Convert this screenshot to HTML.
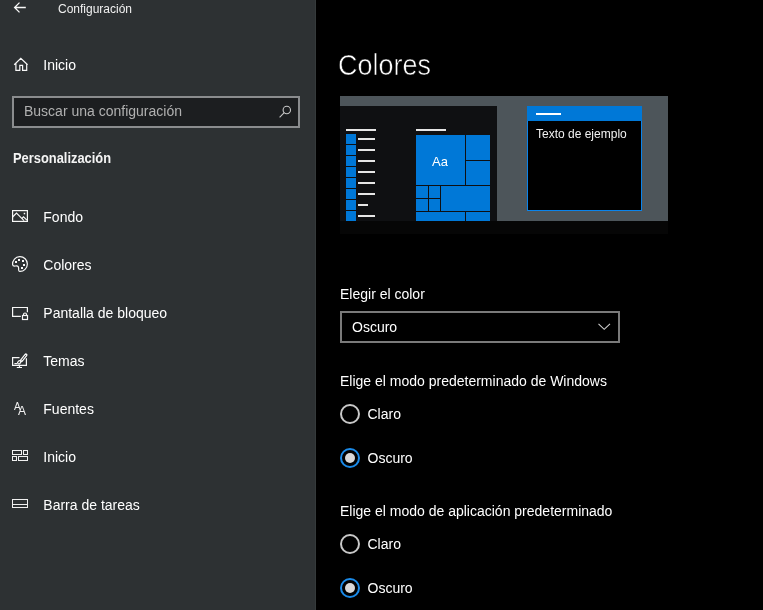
<!DOCTYPE html>
<html><head><meta charset="utf-8">
<style>
*{margin:0;padding:0;box-sizing:border-box}
html,body{width:763px;height:610px;overflow:hidden;background:#000}
body{position:relative;font-family:"Liberation Sans",sans-serif;color:#fff}
.a{position:absolute;white-space:nowrap}
#side{position:absolute;left:0;top:0;width:316px;height:610px;background:#2d3133}
#side .edge{position:absolute;left:315px;top:0;width:1px;height:610px;background:#353a3b}
.t14{font-size:14px;line-height:14px}
.nav{color:#fff}
.tx{filter:grayscale(1)}
svg{position:absolute;overflow:visible}
.pv{position:absolute}
.blue{background:#0078d7}
.wl{background:#e6e6e6;height:2px}
</style></head><body>
<div id="side">
  <div class="edge"></div>
  <!-- back arrow -->
  <svg style="left:13px;top:2px" width="13" height="11" viewBox="0 0 13 11"><path d="M12.8 5.5H1.6M6.5 0.6L1.6 5.5 6.5 10.4" fill="none" stroke="#f8f8f8" stroke-width="1.3"/></svg>
  <div class="a tx" style="left:58px;top:3px;font-size:12px;line-height:12px;color:#f0f0f0">Configuración</div>

  <!-- home -->
  <svg style="left:13px;top:56px" width="16" height="16" viewBox="0 0 16 16"><path d="M1.2 8.8L7.8 2.3 14.6 8.8M2.9 7.3V14.3H6.8V9.4H9.6V14.3H13.7V7.3" fill="none" stroke="#f8f8f8" stroke-width="1.2"/></svg>
  <div class="a tx t14 nav" style="left:43.3px;top:58px">Inicio</div>

  <!-- search -->
  <div class="a" style="left:12px;top:96px;width:288px;height:32px;border:2px solid #8a8c8e;background:#1c1e20"></div>
  <div class="a tx t14" style="left:24px;top:104px;color:#b0b0b0">Buscar una configuración</div>
  <svg style="left:279px;top:105px" width="13" height="13" viewBox="0 0 13 13"><circle cx="7.8" cy="5" r="3.7" fill="none" stroke="#c8c8c8" stroke-width="1.1"/><path d="M5.2 7.6L0.6 12.3" stroke="#c8c8c8" stroke-width="1.1"/></svg>

  <div class="a tx" style="left:12.5px;top:151px;font-size:14px;line-height:14px;font-weight:bold;color:#f4f4f4;transform:scaleX(0.92);transform-origin:0 0">Personalización</div>

  <!-- Fondo -->
  <svg style="left:12px;top:210px" width="16" height="12" viewBox="0 0 16 12"><rect x="0.6" y="0.6" width="14.8" height="10.8" fill="none" stroke="#f8f8f8" stroke-width="1.2"/><path d="M0.6 7L4.5 3.1 12 10.6M10 8.4L11.5 6.8 14.9 10.2" fill="none" stroke="#f8f8f8" stroke-width="1.2"/><rect x="11.7" y="2.8" width="1.5" height="1.5" fill="#f8f8f8"/></svg>
  <div class="a tx t14 nav" style="left:43.3px;top:210px">Fondo</div>

  <!-- Colores -->
  <svg style="left:12px;top:256px" width="16" height="16" viewBox="0 0 16 16"><path d="M7.6 15.4A7.4 7.4 0 1 0 0.6 8.6C0.8 10 2 10.2 3.4 10C5 9.6 6.6 10 6.6 12V13.6C6.6 14.8 6.8 15.4 7.6 15.4z" fill="none" stroke="#f8f8f8" stroke-width="1.2"/><rect x="3" y="5" width="2" height="2" fill="#f8f8f8"/><rect x="6" y="3" width="2" height="2" fill="#f8f8f8"/><rect x="10" y="4" width="2" height="2" fill="#f8f8f8"/><rect x="11" y="8" width="2" height="2" fill="#f8f8f8"/><rect x="9" y="11" width="2" height="2" fill="#f8f8f8"/></svg>
  <div class="a tx t14 nav" style="left:43.3px;top:258px">Colores</div>

  <!-- Pantalla de bloqueo -->
  <svg style="left:12px;top:306px" width="16" height="15" viewBox="0 0 16 15"><path d="M8.8 10.4H0.6V1.5H15.4V6.3" fill="none" stroke="#f8f8f8" stroke-width="1.2"/><rect x="10.5" y="9.5" width="5" height="4" fill="none" stroke="#f8f8f8" stroke-width="1.2"/><path d="M11.5 9.5V8.5A1.5 1.5 0 0 1 14.5 8.5V9.5" fill="none" stroke="#f8f8f8" stroke-width="1.2"/></svg>
  <div class="a tx t14 nav" style="left:43.3px;top:306px">Pantalla de bloqueo</div>

  <!-- Temas -->
  <svg style="left:12px;top:353px" width="16" height="16" viewBox="0 0 16 16"><path d="M7.5 4.6H0.6V12.4H14.4V5.2M7.5 12.4V14.4M4.8 14.5H10" fill="none" stroke="#f8f8f8" stroke-width="1.2"/><path d="M2.4 10.6H5.2" stroke="#f8f8f8" stroke-width="1.2"/><path d="M9.5 7.5L13.9 2" stroke="#f8f8f8" stroke-width="3.2" stroke-linecap="round"/><path d="M9.7 7.3L13.7 2.2" stroke="#2d3133" stroke-width="1"/><ellipse cx="7.2" cy="9.3" rx="1.8" ry="1.3" transform="rotate(-45 7.2 9.3)" fill="#2d3133" stroke="#f8f8f8" stroke-width="1.2"/></svg>
  <div class="a tx t14 nav" style="left:43.3px;top:354px">Temas</div>

  <!-- Fuentes -->
  <div class="a tx" style="left:14px;top:402px;font-size:10px;line-height:10px;color:#f0f0f0">A</div>
  <div class="a tx" style="left:18px;top:404.5px;font-size:12px;line-height:13px;color:#f0f0f0">A</div>
  <div class="a tx t14 nav" style="left:43.3px;top:402px">Fuentes</div>

  <!-- Inicio (start) -->
  <svg style="left:12px;top:450px" width="17" height="12" viewBox="0 0 17 12"><rect x="0.5" y="0.5" width="9" height="4" fill="none" stroke="#f0f0f0"/><rect x="11.5" y="0.5" width="4" height="4" fill="none" stroke="#f0f0f0"/><rect x="0.5" y="6.5" width="4" height="4" fill="none" stroke="#f0f0f0"/><rect x="6.5" y="6.5" width="9" height="4" fill="none" stroke="#f0f0f0"/></svg>
  <div class="a tx t14 nav" style="left:43.3px;top:450px">Inicio</div>

  <!-- Barra de tareas -->
  <svg style="left:12px;top:499px" width="16" height="10" viewBox="0 0 16 10"><rect x="0.5" y="0.5" width="15" height="8" fill="none" stroke="#f0f0f0"/><path d="M0.5 5.5H15.5" stroke="#f0f0f0"/></svg>
  <div class="a tx t14 nav" style="left:43.3px;top:498px">Barra de tareas</div>
</div>

<!-- main -->
<div class="a tx" style="left:337.5px;top:50.5px;font-size:29px;line-height:29px;color:#fff;-webkit-text-stroke:0.6px #000;transform:scaleX(0.93);transform-origin:0 0">Colores</div>

<!-- preview -->
<div class="pv" style="left:340px;top:96px;width:328px;height:125px;background:#4d555a"></div>
<div class="pv" style="left:340px;top:221px;width:328px;height:13px;background:#060606"></div>
<div class="pv" style="left:340px;top:106px;width:157px;height:115px;background:#0f1012"></div>
<div class="pv wl" style="left:346px;top:129px;width:30px"></div>
<div class="pv wl" style="left:416px;top:129px;width:30px"></div>
<div class="pv blue" style="left:346px;top:134px;width:10px;height:10px"></div>
<div class="pv wl" style="left:358px;top:138px;width:17px"></div>
<div class="pv blue" style="left:346px;top:145px;width:10px;height:10px"></div>
<div class="pv wl" style="left:358px;top:149px;width:17px"></div>
<div class="pv blue" style="left:346px;top:156px;width:10px;height:10px"></div>
<div class="pv wl" style="left:358px;top:160px;width:17px"></div>
<div class="pv blue" style="left:346px;top:167px;width:10px;height:10px"></div>
<div class="pv wl" style="left:358px;top:171px;width:17px"></div>
<div class="pv blue" style="left:346px;top:178px;width:10px;height:10px"></div>
<div class="pv wl" style="left:358px;top:182px;width:17px"></div>
<div class="pv blue" style="left:346px;top:189px;width:10px;height:10px"></div>
<div class="pv wl" style="left:358px;top:193px;width:17px"></div>
<div class="pv blue" style="left:346px;top:200px;width:10px;height:10px"></div>
<div class="pv wl" style="left:358px;top:204px;width:10px"></div>
<div class="pv blue" style="left:346px;top:211px;width:10px;height:10px"></div>
<div class="pv wl" style="left:358px;top:215px;width:17px"></div>

<!-- tiles -->
<div class="pv blue" style="left:416px;top:135px;width:49px;height:50px"></div>
<div class="pv blue" style="left:466px;top:135px;width:24px;height:25px"></div>
<div class="pv blue" style="left:466px;top:161px;width:24px;height:24px"></div>
<div class="pv blue" style="left:416px;top:186px;width:12px;height:12px"></div>
<div class="pv blue" style="left:429px;top:186px;width:11px;height:12px"></div>
<div class="pv blue" style="left:416px;top:199px;width:12px;height:12px"></div>
<div class="pv blue" style="left:429px;top:199px;width:11px;height:12px"></div>
<div class="pv blue" style="left:441px;top:186px;width:49px;height:25px"></div>
<div class="pv blue" style="left:416px;top:212px;width:49px;height:9px"></div>
<div class="pv blue" style="left:466px;top:212px;width:24px;height:9px"></div>
<div class="a tx" style="left:432px;top:155px;font-size:13px;line-height:13px;color:#fff">Aa</div>
<!-- window -->
<div class="pv" style="left:527px;top:106px;width:115px;height:105px;background:#000;border:1px solid #0a84ec"></div>
<div class="pv blue" style="left:527px;top:106px;width:115px;height:15px"></div>
<div class="pv wl" style="left:536px;top:113px;width:25px;background:#fff"></div>
<div class="a tx" style="left:536px;top:128px;font-size:12px;line-height:12px;color:#f0f0f0">Texto de ejemplo</div>

<!-- controls -->
<div class="a tx t14" style="left:340px;top:287px">Elegir el color</div>
<div class="a" style="left:340px;top:311px;width:280px;height:32px;border:2px solid #7a7a7a"></div>
<div class="a tx t14" style="left:352px;top:320px">Oscuro</div>
<svg style="left:598px;top:323px" width="13" height="7" viewBox="0 0 13 7"><path d="M0.5 0.8L6.2 6.3 12 0.8" fill="none" stroke="#d0d0d0" stroke-width="1.1"/></svg>

<div class="a tx t14" style="left:340px;top:374px">Elige el modo predeterminado de Windows</div>
<div class="a" style="left:340px;top:404px;width:20px;height:20px;border:2px solid #c8c8c8;border-radius:50%"></div>
<div class="a tx t14" style="left:367.5px;top:407px">Claro</div>
<div class="a" style="left:340px;top:448px;width:20px;height:20px;border:2px solid #1a8ae8;border-radius:50%"></div>
<div class="a" style="left:345px;top:453px;width:10px;height:10px;background:#d8d8d8;border-radius:50%"></div>
<div class="a tx t14" style="left:367.5px;top:451px">Oscuro</div>

<div class="a tx t14" style="left:340px;top:504px">Elige el modo de aplicación predeterminado</div>
<div class="a" style="left:340px;top:534px;width:20px;height:20px;border:2px solid #c8c8c8;border-radius:50%"></div>
<div class="a tx t14" style="left:367.5px;top:537px">Claro</div>
<div class="a" style="left:340px;top:578px;width:20px;height:20px;border:2px solid #1a8ae8;border-radius:50%"></div>
<div class="a" style="left:345px;top:583px;width:10px;height:10px;background:#d8d8d8;border-radius:50%"></div>
<div class="a tx t14" style="left:367.5px;top:581px">Oscuro</div>
</body></html>
